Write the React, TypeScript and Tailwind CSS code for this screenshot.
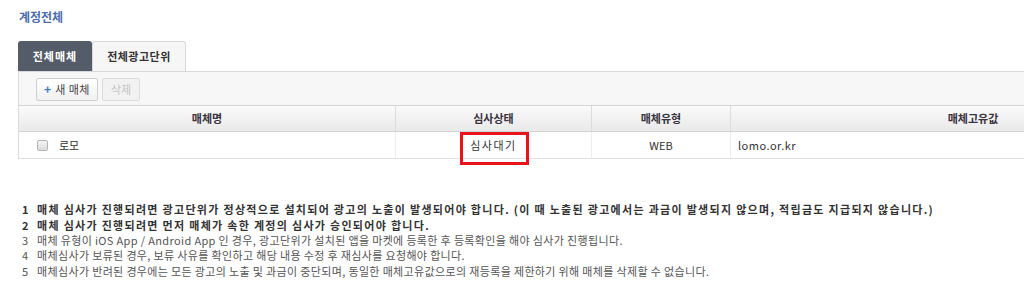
import React from "react";

const notes: { text: string; bold: boolean }[] = [
  { text: "매체 심사가 진행되려면 광고단위가 정상적으로 설치되어 광고의 노출이 발생되어야 합니다. (이 때 노출된 광고에서는 과금이 발생되지 않으며, 적립금도 지급되지 않습니다.)", bold: true },
  { text: "매체 심사가 진행되려면 먼저 매체가 속한 계정의 심사가 승인되어야 합니다.", bold: true },
  { text: "매체 유형이 iOS App / Android App 인 경우, 광고단위가 설치된 앱을 마켓에 등록한 후 등록확인을 해야 심사가 진행됩니다.", bold: false },
  { text: "매체심사가 보류된 경우, 보류 사유를 확인하고 해당 내용 수정 후 재심사를 요청해야 합니다.", bold: false },
  { text: "매체심사가 반려된 경우에는 모든 광고의 노출 및 과금이 중단되며, 동일한 매체고유값으로의 재등록을 제한하기 위해 매체를 삭제할 수 없습니다.", bold: false },
];

export default function App() {
  return (
    <div className="w-[1024px] h-[307px] overflow-hidden bg-white font-['Noto_Sans_CJK_KR',sans-serif] text-[11px] text-[#333]">
      <div className="pl-[19px] pt-[9px] h-[41px] text-[12px] font-bold text-[#4a6db3] leading-[16px]">계정전체</div>

      <div className="flex pl-[18px] h-[30px]">
        <div className="w-[74px] h-[30px] bg-[#535c68] rounded-t-[3px] text-white font-bold text-[11px] tracking-[1px] flex items-center justify-center">전체매체</div>
        <div className="w-[94px] h-[30px] bg-[#f6f6f6] border border-b-0 border-[#d9d9d9] rounded-t-[3px] text-[#333] font-bold text-[11px] tracking-[0.5px] flex items-center justify-center">전체광고단위</div>
      </div>

      <div className="ml-[18px] w-[1200px] border-l border-[#dcdcdc]">
        <div className="h-[34px] bg-[#f7f7f7] border-t border-[#d9d9d9] flex items-center gap-[4px] pl-[17px] pt-[1px]">
          <div className="w-[62px] h-[23px] bg-gradient-to-b from-white to-[#f1f1f1] border border-[#cfcfcf] rounded-[2px] flex items-center justify-center gap-[4px] text-[11px] text-[#444]">
            <span className="text-[#3b78d8] font-bold text-[12px] leading-none">+</span>
            <span className="tracking-[0.5px]">새 매체</span>
          </div>
          <div className="w-[38px] h-[23px] bg-[#f2f2f2] border border-[#dcdcdc] rounded-[2px] flex items-center justify-center text-[11px] text-[#c4c4c4]">삭제</div>
        </div>

        <div className="flex h-[27px] bg-gradient-to-b from-[#fafafa] to-[#e9e9e9] border-t border-b border-[#d3d3d3] font-bold text-[#3a3340]">
          <div className="w-[377px] flex items-center justify-center border-r border-[#dcdcdc]">매체명</div>
          <div className="w-[196px] flex items-center justify-center border-r border-[#dcdcdc]">심사상태</div>
          <div className="w-[139px] flex items-center justify-center border-r border-[#dcdcdc]">매체유형</div>
          <div className="w-[484px] flex items-center justify-center">매체고유값</div>
        </div>

        <div className="flex h-[27px] border-b border-[#e3e3e3]">
          <div className="w-[377px] flex items-center pl-[18px] border-r border-[#ececec]">
            <span className="w-[11px] h-[11px] rounded-[2px] border border-[#b5b5b5] bg-gradient-to-b from-[#f4f4f4] to-[#dcdcdc]" />
            <span className="ml-[11px]">로모</span>
          </div>
          <div className="w-[196px] relative flex items-center justify-center border-r border-[#ececec]">
            <span className="tracking-[1.5px]">심사대기</span>
            <div className="absolute left-[64px] top-0 w-[69px] h-[33px] border-[3px] border-[#e8141a]" />
          </div>
          <div className="w-[139px] flex items-center justify-center border-r border-[#ececec]">WEB</div>
          <div className="w-[484px] flex items-center pl-[7px] tracking-[0.5px]">lomo.or.kr</div>
        </div>
      </div>

      <div className="pt-[43px] pl-[22px]">
        {notes.map((n, i) => (
          <div key={i} className={`flex h-[15.4px] items-center leading-[15px] ${n.bold ? "font-bold text-[#333]" : "text-[#555]"}`}>
            <span className="w-[15px]">{i + 1}</span>
            <span className={`whitespace-nowrap ${n.bold ? "tracking-[1.3px]" : "tracking-[0.35px]"}`}>{n.text}</span>
          </div>
        ))}
      </div>
    </div>
  );
}
